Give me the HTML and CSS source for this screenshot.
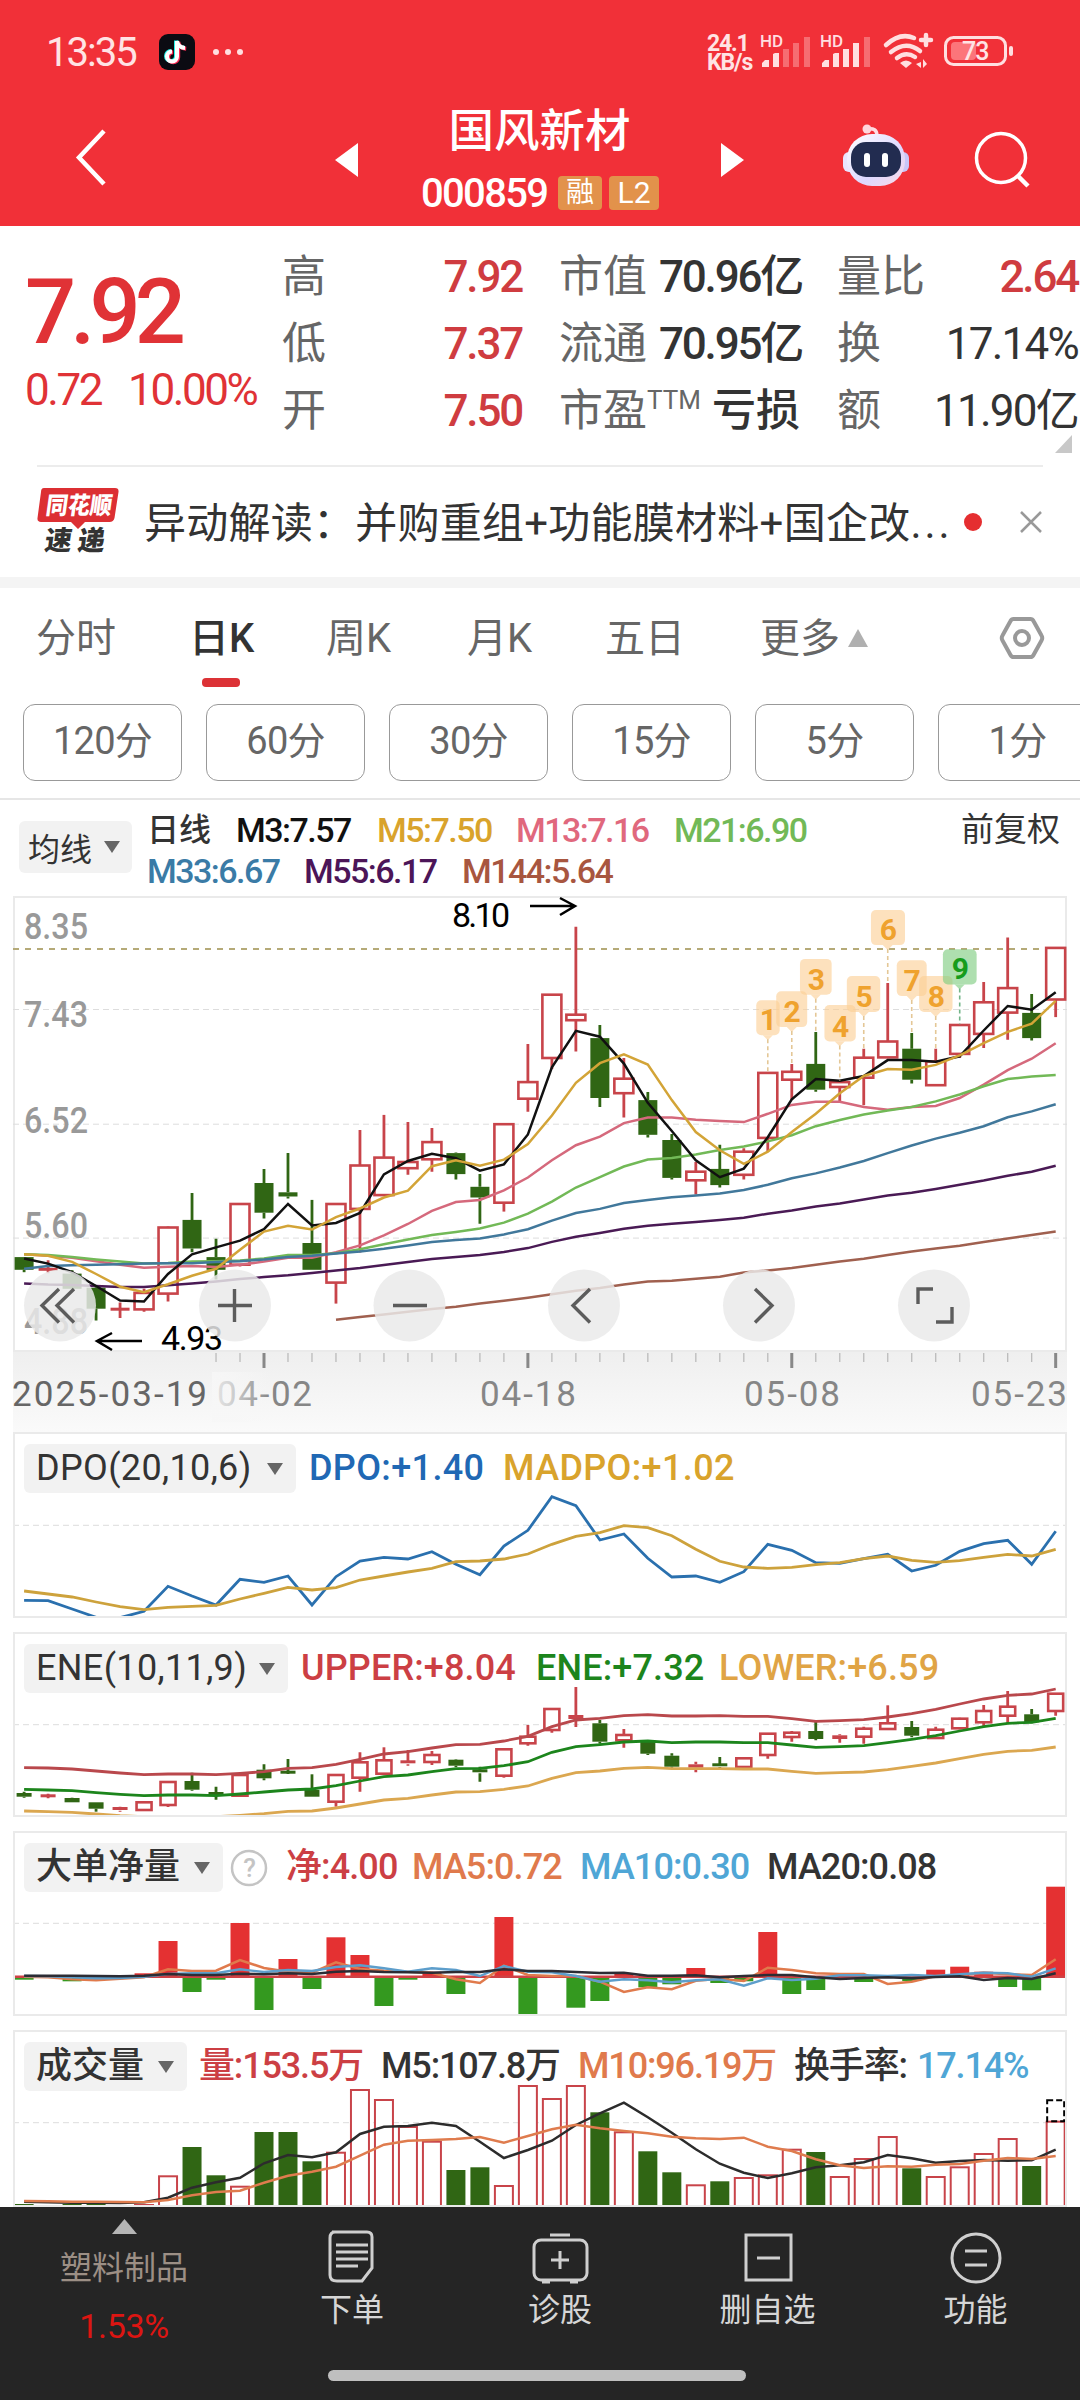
FILE: index.html
```html
<!DOCTYPE html>
<html lang="zh-CN">
<head>
<meta charset="utf-8">
<title>国风新材 000859</title>
<link rel="stylesheet" href="styles.css">
</head>
<body>
<header class="top">
  <div class="status">
    <span class="clock">13:35</span>
    <svg class="tiktok" width="36" height="36" viewBox="0 0 36 36"><rect width="36" height="36" rx="9" fill="#0b0b12"/><g fill="none" stroke-width="4"><path d="M18 7v15.500a5 5 0 1 1-5-5M18 7q1 6.500 8 7" stroke="#25f4ee" transform="translate(-1 -.5)"/><path d="M18 7v15.500a5 5 0 1 1-5-5M18 7q1 6.500 8 7" stroke="#fe2c55" transform="translate(1.200 .8)"/><path d="M18 7v15.500a5 5 0 1 1-5-5M18 7q1 6.500 8 7" stroke="#fff"/></g></svg>
    <svg class="dots" width="32" height="8" viewBox="0 0 32 8" fill="#ffdfe0"><circle cx="4" cy="4" r="3"/><circle cx="16" cy="4" r="3"/><circle cx="28" cy="4" r="3"/></svg>
    <div class="speed"><span>24.1</span><span>KB/s</span></div>
    <svg class="signals" width="256" height="44" viewBox="759 30 256 44">
      <g fill="#ffdfe0">
        <text x="761" y="47" class="hd">HD</text><text x="821" y="47" class="hd">HD</text>
        <path d="M763 67v-4l3-3h4v7zM774 67V54l2-1h4v14z"/>
        <path d="M784 67V49h6v18zM794 67V43h6v24zM805 67V37h6v30z" opacity=".35"/>
        <path d="M823 67v-4l3-3h4v7zM834 67V54l2-1h4v14zM844 67V49h6v18zM854 67V43h6v24z"/>
        <path d="M865 67V37h6v30z" opacity=".35"/>
        <path d="M901 63q6-5 12 0l-6 5z"/>
        <path d="M922 62v6l-5-4zM924 68v-9l4 5z"/>
      </g>
      <g fill="none" stroke="#ffdfe0" stroke-width="5" stroke-linecap="round">
        <path d="M887 45q14-13 28-7M892 52q15-12 29-1M898 58q9-7 18-1M927 35v10M922 40h10" stroke-width="4.500"/>
        <rect x="946.500" y="37.500" width="60" height="27" rx="8" stroke-width="3"/>
        <path d="M1012 48v6" stroke-width="4"/>
      </g>
      <rect x="952" y="42" width="25" height="18" rx="4" fill="#ff8c90" opacity=".75"/>
      <text x="963" y="60" class="batt">73</text>
    </svg>
  </div>
  <nav class="nav">
    <svg class="back" width="32" height="60" viewBox="0 0 32 60"><path d="M29 3 4 29.500 29 56" fill="none" stroke="#fff" stroke-width="4.500"/></svg>
    <svg class="prev" width="23" height="34" viewBox="0 0 23 34"><path d="M23 0v34L0 17z" fill="#fff"/></svg>
    <div class="stock">
      <h1>国风新材</h1>
      <div class="code"><span class="num">000859</span><b class="cn">融</b><b class="l2">L2</b></div>
    </div>
    <svg class="next" width="23" height="34" viewBox="0 0 23 34"><path d="M0 0v34l23-17z" fill="#fff"/></svg>
    <svg class="bot" width="68" height="64" viewBox="0 0 68 64">
      <defs><linearGradient id="shell" x1="0" y1="0" x2="1" y2="1"><stop offset="0" stop-color="#fff"/><stop offset=".6" stop-color="#ddd8ff"/><stop offset="1" stop-color="#fbd9e6"/></linearGradient></defs>
      <path d="M25 6q10-2 10 7" fill="none" stroke="#ffdce2" stroke-width="3.500"/><circle cx="25" cy="6" r="4.500" fill="#ffd5dc"/>
      <rect x="1" y="29" width="14" height="20" rx="6" fill="#e9e4ff"/><rect x="53" y="29" width="14" height="20" rx="6" fill="#c9c6f8"/>
      <rect x="5" y="11" width="58" height="52" rx="25" fill="url(#shell)"/>
      <rect x="9" y="19" width="50" height="35" rx="15" fill="#222c50"/>
      <rect x="22" y="30" width="6" height="14" rx="3" fill="#fff"/><rect x="40" y="30" width="6" height="14" rx="3" fill="#fff"/>
    </svg>
    <svg class="search" width="58" height="58" viewBox="0 0 58 58"><circle cx="27" cy="27" r="24.500" fill="none" stroke="#fff" stroke-width="3.500"/><path d="M44 45l10 10" stroke="#fff" stroke-width="4.500"/></svg>
  </nav>
</header>

<section class="quote">
  <div class="price"><div class="last">7.92</div><div class="chg"><span>0.72</span><span>10.00%</span></div></div>
  <dl class="stats">
    <dt>高</dt><dd class="up">7.92</dd><dt>市值</dt><dd>70.96亿</dd><dt>量比</dt><dd class="up">2.64</dd>
    <dt>低</dt><dd class="up">7.37</dd><dt>流通</dt><dd>70.95亿</dd><dt>换</dt><dd class="lite">17.14%</dd>
    <dt>开</dt><dd class="up">7.50</dd><dt>市盈<sup>TTM</sup></dt><dd class="loss">亏损</dd><dt>额</dt><dd class="lite">11.90亿</dd>
  </dl>
</section>
<div class="expand"><svg width="17" height="18"><path d="M17 0v18H0z" fill="#c8c8c8"/></svg></div>

<section class="news">
  <svg width="84" height="76" viewBox="0 -1 84 76"><path d="M7 3h71q4 0 3.500 4l-4 26q-1 4-5 4H48l-7 7-7-7H4q-4 0-3.500-4L4 7q0-4 3-4z" fill="#dc2f33"/><text class="logo1" x="8" y="29" textLength="66" lengthAdjust="spacingAndGlyphs" transform="skewX(-8) translate(4 0)">同花顺</text><text class="logo2" x="9" y="65" textLength="60" transform="skewX(-8) translate(7 0)">速递</text></svg>
  <p>异动解读：并购重组+功能膜材料+国企改<i>...</i></p>
  <span class="dot"></span>
  <svg class="close" width="22" height="22" viewBox="0 0 22 22"><path d="M1 1l20 20M21 1L1 21" stroke="#999" stroke-width="2.500"/></svg>
</section>

<nav class="tabs">
  <a>分时</a><a class="on">日K</a><a>周K</a><a>月K</a><a>五日</a><a>更多<svg width="20" height="18"><path d="M10 0l10 18H0z" fill="#b0b0b0"/></svg></a>
  <svg class="gear" width="46" height="44" viewBox="0 0 46 44"><g fill="none" stroke="#999" stroke-width="4"><path d="M14.500 3h17q2 0 3 2l8 14.500q1.500 2.500 0 5L34.500 39q-1 2-3 2h-17q-2 0-3-2l-8-14.500q-1.500-2.500 0-5L11.500 5q1-2 3-2z"/><circle cx="23" cy="22" r="7"/></g></svg>
</nav>
<div class="chips"><a>120分</a><a>60分</a><a>30分</a><a>15分</a><a>5分</a><a>1分</a></div>

<section class="ma">
  <a class="pill">均线<i class="tri"></i></a>
  <div class="rows">
    <div class="row r1"><span class="day">日线</span><span class="k">M3:7.57</span><span class="gold">M5:7.50</span><span class="pink">M13:7.16</span><span class="lime">M21:6.90</span><span class="adj">前复权</span></div>
    <div class="row r2"><span class="blue">M33:6.67</span><span class="plum">M55:6.17</span><span class="brown">M144:5.64</span></div>
  </div>
</section>

<svg id="kline" width="1080" height="536" viewBox="0 896 1080 536"></svg>

<section class="panel">
  <div class="legend dpo"><a class="pill">DPO(20,10,6)<i class="tri"></i></a><span class="c-dpo">DPO:+1.40</span><span class="gold">MADPO:+1.02</span></div>
  <svg id="dpo" width="1054" height="186" viewBox="13 1432 1054 186"></svg>
</section>
<section class="panel">
  <div class="legend ene"><a class="pill">ENE(10,11,9)<i class="tri"></i></a><span class="c-up">UPPER:+8.04</span><span class="c-ene">ENE:+7.32</span><span class="c-low">LOWER:+6.59</span></div>
  <svg id="ene" width="1054" height="185" viewBox="13 1632 1054 185"></svg>
</section>
<section class="panel">
  <div class="legend net"><a class="pill">大单净量<i class="tri"></i></a><svg width="38" height="38" viewBox="0 0 38 38"><circle cx="19" cy="19" r="17" fill="none" stroke="#c4c4c4" stroke-width="2.500"/><text x="19" y="28" class="q">?</text></svg><span class="c-up">净:4.00</span><span class="c-or">MA5:0.72</span><span class="c-sky">MA10:0.30</span><span class="c-dk">MA20:0.08</span></div>
  <svg id="net" width="1054" height="185" viewBox="13 1831 1054 185"></svg>
</section>
<section class="panel last-panel">
  <div class="legend vol"><a class="pill">成交量<i class="tri"></i></a><span class="c-up">量:153.5万</span><span class="c-dk">M5:107.8万</span><span class="c-or">M10:96.19万</span><span class="c-dk">换手率:</span><span class="c-sky">17.14%</span></div>
  <svg id="vol" width="1054" height="177" viewBox="13 2030 1054 177"></svg>
</section>

<footer>
  <div class="bar">
    <a class="sector"><svg width="25" height="15"><path d="M12.500 0L25 15H0z" fill="#b5b5b5"/></svg><span>塑料制品</span><em>1.53%</em></a>
    <a><svg width="60" height="60" viewBox="0 0 60 60"><path d="M10 5h35q5 0 5 5v31l-10 13H15q-7 0-7-6V11q0-6 5-6" /><path d="M14 18h32M14 25h32M14 32h32M14 39h22"/></svg><span>下单</span></a>
    <a><svg width="60" height="60" viewBox="0 0 60 60"><rect x="4" y="13" width="53" height="40" rx="7"/><path d="M20 8h20M30 24v18M21 33h18M12 55h8M40 55h8"/></svg><span>诊股</span></a>
    <a><svg width="60" height="60" viewBox="0 0 60 60"><rect x="8" y="8" width="45" height="45"/><path d="M19 31h23"/></svg><span>删自选</span></a>
    <a><svg width="60" height="60" viewBox="0 0 60 60"><circle cx="30" cy="31" r="24"/><path d="M19 24h22M19 38h22"/></svg><span>功能</span></a>
  </div>
  <div class="home"></div>
</footer>
<script src="charts.js"></script>
</body>
</html>
```
FILE: styles.css
```css
*{box-sizing:border-box}
body{margin:0;width:1080px;height:2400px;overflow:hidden;background:#fff;color:#333;font-family:Roboto,"Noto Sans CJK SC",sans-serif;display:flex;flex-direction:column}
body>*{flex:none}
svg{display:block}
i,em{font-style:normal}
h1,p,dl,dd{margin:0}
.top{height:226px;background:#f13038;color:#fff}
.status{height:104px;display:flex;align-items:center;color:#ffe3e4}
.clock{margin-left:46px;width:113px;font-size:40px;letter-spacing:-.05em}
.dots{margin-left:17px}
.speed{margin-left:463px;width:51px;font-size:23px;font-weight:700;line-height:19px;letter-spacing:-.05em;white-space:nowrap;display:flex;flex-direction:column;padding-top:2px}
.signals{overflow:visible}
.hd{font-size:17px;font-weight:500}
.batt{font-size:25px;font-weight:500;letter-spacing:-1px;fill:#ffe3e4}
.nav{display:flex;align-items:flex-start}
.back{margin:24px 0 0 75px}
.prev{margin:39px 0 0 228px}
.stock{width:363px;display:flex;flex-direction:column;align-items:center}
h1{font-size:45.500px;line-height:50px;font-weight:500;margin-top:3px}
.code{display:flex;align-items:center;margin-top:15px;height:42px;font-size:40px;padding-left:1px}
.num{letter-spacing:-.042em;width:137px;font-weight:500}
.code b{font-size:30px;font-weight:400;height:34px;line-height:34px;background:#e2924b;border-radius:4px;text-align:center}
.code .cn{width:44px;margin-right:7px;font-size:28px}
.l2{width:50px}
.next{margin:39px 0 0}
.bot{margin:19px 0 0 98px}
.search{margin:27px 0 0 64px}
.quote{height:209px;display:flex}
.price{width:282px;padding-left:25px;color:#e03236}
.last{font-size:90px;font-weight:500;line-height:90px;margin-top:42px;letter-spacing:-.065em}
.chg{font-size:44px;line-height:50px;margin-top:7px;letter-spacing:-.055em;display:flex;gap:27px;white-space:nowrap}
.stats{display:grid;width:798px;grid-template-columns:80px 160px 137px 141px 110px 168px;grid-template-rows:repeat(3,67px);margin-top:18px}
.stats dt{font-size:44px;line-height:67px;color:#666;white-space:nowrap}
.stats dd{font-size:44px;line-height:67px;text-align:right;font-weight:500;letter-spacing:-.05em;white-space:nowrap}
.stats dd.loss{letter-spacing:0}
.stats dt:nth-of-type(3n+2){padding-left:37px;width:0}
.stats dt:nth-of-type(3n){padding-left:37px}
.stats .up{color:#cf3c40}
.stats dd.lite{font-weight:400;letter-spacing:-.04em}
.stats sup{font-size:26px;line-height:0;position:relative;top:-1px}
.expand{height:32px;display:flex;justify-content:flex-end;border-bottom:2px solid #ececec;margin:0 37px}
.expand svg{margin-right:-29px}
.news{height:110px;display:flex;align-items:center;padding-left:37px}
.news p{margin:-6px 0 0 23px;width:820px;font-size:42px;white-space:nowrap;letter-spacing:.006em}
.news i{letter-spacing:3px}
.logo1{font-size:24px;font-weight:900;fill:#fff}
.logo2{font-size:27px;font-weight:900;fill:#333}
.dot{width:18px;height:18px;border-radius:50%;background:#e52e30}
.close{margin-left:38px}
.tabs{height:127px;border-top:11px solid #f4f4f4;display:flex;color:#666;font-size:40px;line-height:56px;padding:23px 0 0 36px}
.tabs a{width:153px;height:84px;white-space:nowrap;display:flex;align-items:flex-start}
.tabs a:nth-of-type(2){width:137px;color:#333;font-weight:500;flex-direction:column}
.tabs a:nth-of-type(2)::after{content:"";width:38px;height:9px;border-radius:4px;background:#dc3236;margin:11px 0 0 13px}
.tabs a:nth-of-type(3){width:141px}
.tabs a:nth-of-type(4){width:138px}
.tabs a:nth-of-type(5){width:155px}
.tabs a:nth-of-type(6){width:239px}
.tabs a svg{margin:18px 0 0 8px}
.gear{margin-top:5px}
.chips{height:96px;border-bottom:2px solid #e6e6e6;display:flex;gap:24px;padding-left:23px;overflow:hidden}
.chips a{flex:none;width:159px;height:77px;border:1.500px solid #999;border-radius:12px;font-size:38px;line-height:72px;text-align:center;color:#666;letter-spacing:-.02em}
.pill{background:#f2f2f2;border-radius:6px;display:flex;align-items:center;justify-content:space-between;color:#333;white-space:nowrap}
.tri{display:block;border:8px solid transparent;border-top:12px solid #666;border-bottom:0}
.ma{height:96px;display:flex;padding-left:19px}
.ma .pill{width:113px;height:52px;margin-top:21px;font-size:32px;padding:0 12px 0 9px}
.rows{padding:9px 0 0 15px}
.row{display:grid;font-size:34px;line-height:42px;height:41px;white-space:nowrap;letter-spacing:-.045em;font-weight:500}
.r1{grid-template-columns:89px 141px 139px 158px 287px 110px}
.r2{grid-template-columns:157px 158px 200px}
.day{letter-spacing:0;font-size:32px}
.adj{letter-spacing:0;font-size:33px;font-weight:400}
.k{color:#111}.gold{color:#d9a32c}.pink{color:#e0687d}.lime{color:#72b957}.blue{color:#3a7ba6}.plum{color:#4c1558}.brown{color:#a8563f}
.panel{position:relative;height:186px;margin:0 13px 14px;outline:2px solid #eaeaea;outline-offset:-2px}
.panel:nth-of-type(n+5){height:185px}
.panel.last-panel{height:177px;margin-bottom:0;overflow:hidden}
.legend{position:absolute;left:11px;top:12px;display:grid;align-items:center;font-size:36px;line-height:49px;white-space:nowrap;z-index:1;font-weight:500}
.legend .pill{height:49px;padding:0 13px 0 12px;justify-self:start}
.dpo{grid-template-columns:285px 194px 300px;letter-spacing:.01em}
.ene{grid-template-columns:277px 235px 183px 240px;letter-spacing:.004em}
.net{grid-template-columns:206px 56px 126px 168px 187px 200px;letter-spacing:-.025em}
.vol{grid-template-columns:175px 182px 197px 216px 123px 120px;letter-spacing:-.032em}
.dpo .pill{width:272px;letter-spacing:.01em;font-weight:400}
.ene .pill{width:264px;letter-spacing:.01em;font-weight:400}
.net .pill{width:199px;letter-spacing:0}
.vol .pill{width:163px;letter-spacing:0}
.q{font-size:26px;fill:#c4c4c4;text-anchor:middle}
.c-dpo{color:#2068b4}.c-up{color:#cc3f44}.c-ene{color:#1c851c}.c-low{color:#e0a445}.c-or{color:#e07a4c}.c-sky{color:#4fa6d6}.c-dk{color:#333}
.ylab{font-size:36px;font-weight:500;fill:#999}
.mark{font-size:34px;fill:#000}
.date{font-size:35px;fill:#868686}
.date.first{fill:#666}
.badge{font-size:30px;font-weight:700;text-anchor:middle}
footer{height:193px;background:#252525;color:#d6d6d6}
.bar{display:grid;grid-template-columns:248px 208px 208px 207px 209px;height:163px}
.bar a{display:flex;flex-direction:column;align-items:center;font-size:32px;line-height:40px;padding-top:20px}
.bar a svg{fill:none;stroke:#cfcfcf;stroke-width:3}
.bar a span{margin-top:3px}
.bar .sector{padding-top:12px;color:#9c8f85}
.bar .sector svg{stroke:none}
.bar .sector span{margin-top:14px}
.bar em{color:#dd1512;font-size:34px;letter-spacing:-.01em;margin-top:18px}
.home{width:418px;height:11px;border-radius:6px;background:#bfbfbf;margin-left:328px}
```
FILE: charts.js
```javascript
const RED = '#c8444a', GREEN = '#306614';
const X = i => 24.1 + i * 23.99;

// Each panel stores its values in a local y unit; y0 + v / k gives the page coordinate.
function plot(id, y0, k) {
  const out = [];
  const Y = v => +(y0 + v / k).toFixed(1);
  return {
    Y,
    add: s => out.push(s),
    grid(list) { list.forEach(v => out.push(`<path d="M13 ${Y(v)}H1067" stroke="#ddd" stroke-dasharray="6 4"/>`)); },
    line(vals, color, w = 2.5, from = 0) {
      out.push(`<polyline fill="none" stroke="${color}" stroke-width="${w}" points="${vals.map((v, i) => X(i + from).toFixed(1) + ',' + Y(v)).join(' ')}"/>`);
    },
    candles(rows, width) {
      rows.trim().split(/\s+/).forEach((r, i) => {
        const up = r[0] === 'r', [h, t, b, l] = r.slice(1).split(',').map(Number), x = X(i);
        const color = up ? RED : GREEN, top = Y(t), bh = Math.max(Y(b) - top, 3);
        out.push(`<path d="M${x} ${Y(h)}V${top}M${x} ${Y(b)}V${Y(l)}" stroke="${color}" stroke-width="2.8"/>`);
        if (up && bh > 4) out.push(`<rect x="${x - width / 2}" y="${top}" width="${width}" height="${bh}" fill="#fff" stroke="${color}" stroke-width="2.6"/>`);
        else out.push(`<rect x="${x - width / 2}" y="${top - (bh <= 3 ? 1 : 0)}" width="${width}" height="${bh}" fill="${color}"/>`);
      });
    },
    done() { document.getElementById(id).innerHTML = out.join(''); }
  };
}

// Daily candles
{
  const p = plot('kline', 890, 2.904), Y = p.Y;
  p.add('<defs><linearGradient id="ax" x1="0" y1="0" x2="0" y2="1"><stop offset="0" stop-color="#efefef"/><stop offset="1" stop-color="#fafafa"/></linearGradient><linearGradient id="fade"><stop offset="0" stop-color="#f7f7f7" stop-opacity=".85"/><stop offset=".3" stop-color="#f7f7f7" stop-opacity=".7"/><stop offset="1" stop-color="#f7f7f7" stop-opacity="0"/></linearGradient></defs>');
  p.add('<rect x="13" y="1352" width="1054" height="80" fill="url(#ax)"/><rect x="14" y="897" width="1052" height="454" fill="#fff" stroke="#eaeaea" stroke-width="2"/>');
  p.grid([347, 680, 1011]);
  p.add(`<path d="M13 ${Y(171)}H1067" stroke="#b5aa78" stroke-width="2" stroke-dasharray="6 6"/>`);
  [['8.35', 939], ['7.43', 1027], ['6.52', 1133], ['5.60', 1238], ['4.88', 1334]].forEach(([t, y]) =>
    p.add(`<text class="ylab" x="24" y="${y}" textLength="64" lengthAdjust="spacingAndGlyphs">${t}</text>`));
  p.candles(`g1066,1066,1103,1110 r1075,1100,1103,1113 g1104,1114,1158,1158 g1150,1155,1216,1250 r1198,1216,1219,1243 r1158,1170,1218,1225
    r977,980,1172,1195 g880,958,1041,1052 g1013,1066,1103,1131 r910,912,1088,1093 g810,851,937,954 g764,878,890,896 g900,1025,1103,1103
    r912,912,1140,1201 r697,800,926,1053 r653,777,886,886 r674,790,808,827 r691,732,782,818 g762,764,825,841 g825,862,893,969 r680,680,908,934
    r447,558,606,644 r304,304,488,520 r107,362,378,469 g392,430,604,630 r488,548,590,661 g587,610,711,719 g709,726,836,841 r790,818,843,884
    g740,810,857,864 r750,760,827,841 r531,531,720,760 r505,528,551,610 g412,505,580,586 r555,558,572,615 r461,487,545,625 r270,440,486,486
    g415,461,551,562 r461,498,567,567 r390,392,476,488 r267,326,418,459 r138,285,356,435 g302,357,430,437 r168,168,318,369`, 19);
  p.line([1248,1240,1233,1225,1217,1210,1201,1193,1184,1174,1164,1156,1146,1137,1135,1129,1123,1111,1105,1098,1088,1079,1071,1060,1050,1041,1033,1022,1012,1002,992], '#a0604f', 2.5, 13);
  p.line([1143,1146,1147,1150,1153,1153,1148,1143,1137,1130,1124,1119,1112,1105,1098,1089,1080,1072,1066,1060,1051,1040,1022,1007,996,984,975,969,964,958,952,940,931,919,910,899,887,879,868,856,844,830,818,801], '#4a1a55');
  p.line([1058,1062,1068,1078,1088,1097,1094,1092,1095,1088,1079,1068,1068,1052,1032,1003,970,932,906,900,872,835,785,741,716,677,661,661,667,671,674,650,624,615,615,630,638,630,627,604,565,523,490,445], '#d5697c');
  p.line([1058,1060,1066,1073,1079,1085,1083,1079,1078,1076,1070,1060,1060,1055,1043,1029,1015,1002,993,983,966,940,905,864,834,803,783,778,768,755,745,730,712,686,668,652,640,630,614,594,570,549,542,537], '#72b957');
  p.line([1100,1092,1090,1088,1087,1085,1084,1084,1080,1078,1073,1066,1062,1056,1050,1042,1032,1022,1016,1012,1000,985,960,938,926,909,900,892,887,881,871,856,837,823,806,787,764,742,722,705,686,660,643,622], '#41789b');
  p.line([1070,1085,1110,1150,1192,1195,1115,1058,1038,1018,985,912,974,967,938,826,787,766,779,815,797,710,515,409,426,504,618,700,785,834,809,718,608,549,554,540,494,494,499,483,408,337,348,297], '#111');
  p.line([1058,1062,1080,1115,1152,1168,1145,1120,1100,1045,992,975,986,950,925,893,873,802,785,801,783,738,655,560,503,477,507,610,703,756,795,760,703,650,590,540,520,522,508,480,445,412,388,322], '#d3a437');
  p.add('<g fill="none" stroke="#000" stroke-width="2.5"><path d="M530 906H575M560 898l15 8-15 9"/><path d="M142 1341H97M112 1333l-15 8 15 9"/></g>');
  p.add('<text class="mark" x="452" y="927" textLength="58">8.10</text><text class="mark" x="161" y="1350" textLength="62">4.93</text>');

  const badges = [[1,31,628,696,320,422,530],[2,32,686,776,294,398,505],[3,33,755,847,200,304,412],[4,34,826,917,334,440,555],[5,35,891,988,250,354,461],[6,36,961,1060,58,160,270],[7,37,1036,1123,204,308,415],[8,38,1101,1198,250,354,461],[9,39,1170,1268,172,274,390]];
  badges.forEach(([n, i, a, b, t, bot, end]) => {
    const x = 540 + a / 2.904, w = (b - a) / 2.904, c = X(i), y = Y(t), yb = Y(bot), green = n === 9;
    const color = green ? '#169c1c' : '#efa22e';
    p.add(`<g fill="${green ? '#7ccb7e' : '#fbcf94'}" fill-opacity=".62"><rect x="${x}" y="${y}" width="${w}" height="${yb - y}" rx="5"/><path d="M${c - 5} ${yb}h10l-5 5z"/></g>`);
    p.add(`<path d="M${c} ${yb + 4}V${Y(end)}" stroke="${green ? '#72b588' : '#e4c796'}" stroke-width="1.6" stroke-dasharray="4 3"/>`);
    p.add(`<text class="badge" x="${x + w / 2 + .5}" y="${yb - 5}" fill="${color}">${n}</text>`);
  });

  [60, 235, 409.5, 584, 759, 934].forEach(x => p.add(`<circle cx="${x}" cy="1305.500" r="36" fill="#e9e9e9" fill-opacity=".84"/>`));
  p.add('<g fill="none" stroke="#5c5c5c" stroke-width="3.4"><path d="M59 1289l-17 16.500 17 17M74 1289l-17 16.500 17 17"/><path d="M218 1305.500h34M234.500 1289v33"/><path d="M393 1305.500h34"/><path d="M590 1289l-17 16.500 17 17"/><path d="M755 1289l17 16.500-17 17"/><path d="M933 1289h-15v15M936 1322h16v-15"/></g>');

  for (let i = 8; i < 44; i++) {
    const big = [10, 21, 32, 43].includes(i);
    p.add(`<path d="M${X(i)} 1353v${big ? 15 : 9}" stroke="${big ? '#888' : '#bbb'}" stroke-width="${big ? 3 : 1.3}"/>`);
  }
  [['04-02', 217, 95], ['04-18', 480, 96], ['05-08', 744, 96], ['05-23', 971, 96]].forEach(([t, x, w]) =>
    p.add(`<text class="date" x="${x}" y="1406" textLength="${w}">${t}</text>`));
  p.add('<rect x="212" y="1372" width="58" height="50" fill="url(#fade)"/><text class="date first" x="12" y="1406" textLength="195">2025-03-19</text>');
  p.done();
}

// DPO
{
  const p = plot('dpo', 1425, 3);
  p.grid([301]);
  p.line([526,527,552,577,578,559,484,513,540,463,472,453,540,455,408,397,402,380,418,449,363,316,215,242,345,327,400,456,453,472,440,358,376,413,415,401,388,438,421,379,356,346,418,319], '#2a70ae', 2.8);
  p.line([498,507,516,531,545,554,547,544,541,522,505,487,495,488,465,453,441,430,410,408,402,387,358,334,323,302,308,332,373,409,426,430,427,419,413,401,393,406,412,407,397,388,393,373], '#cda23c', 2.8);
  p.done();
}

// ENE
{
  const p = plot('ene', 1425, 3);
  p.grid([899]);
  p.candles(`g1100,1104,1115,1118 r1106,1111,1116,1120 g1118,1119,1132,1132 g1132,1132,1151,1160 r1145,1149,1157,1160 r1130,1132,1155,1158
    r1071,1071,1140,1146 g1043,1068,1094,1097 g1085,1104,1113,1124 r1050,1050,1112,1112 g1018,1034,1060,1066 g1002,1040,1044,1047
    g1048,1095,1115,1115 r1050,1050,1130,1145 r982,1012,1058,1100 r967,1006,1046,1046 r975,1009,1018,1022 r978,990,1011,1020 g1003,1004,1022,1026
    g1025,1036,1045,1070 r973,973,1052,1058 r900,935,955,962 r850,852,915,923 r786,870,882,906 g885,895,950,956 r912,930,946,968 g945,951,986,990
    g985,992,1025,1028 r1010,1018,1028,1042 g996,1018,1026,1034 r998,1000,1026,1030 r925,926,990,1001 r918,923,936,950 g890,918,942,946
    r928,931,942,953 r905,911,935,956 r841,895,912,912 g888,906,932,937 r905,914,939,940 r878,881,910,913 r840,858,892,906 r798,845,872,895
    g852,868,892,895 r805,806,858,872`, 15);
  p.line([1028,1029,1032,1038,1044,1049,1047,1047,1049,1045,1040,1030,1028,1018,1003,987,980,969,959,958,948,934,905,885,880,872,869,873,873,872,874,874,881,889,887,884,876,866,853,837,822,811,807,792], '#b9484c', 2.8);
  p.line([1093,1095,1097,1103,1108,1112,1110,1110,1112,1107,1101,1095,1092,1082,1068,1055,1050,1040,1031,1030,1022,1010,982,965,959,951,948,953,951,951,953,953,960,967,965,962,953,943,932,918,905,895,892,880], '#1c851c', 2.8);
  p.line([1158,1160,1162,1167,1172,1175,1174,1174,1175,1171,1166,1159,1158,1149,1137,1125,1120,1110,1101,1100,1093,1083,1060,1043,1038,1030,1027,1031,1031,1031,1032,1032,1039,1045,1043,1041,1034,1024,1014,1001,988,979,976,966], '#dba750', 2.8);
  p.done();
}

// Net large-order volume
{
  const p = plot('net', 1820, 3), Y = p.Y;
  p.grid([310]);
  [479,470,484,470,470,460,363,516,479,309,570,417,507,352,405,558,479,455,522,474,291,588,465,563,543,462,502,493,444,489,484,336,522,510,468,486,470,483,449,440,455,501,511,200].forEach((v, i) => {
    const up = v < 470, y = Y(Math.min(v, 470));
    p.add(`<rect x="${X(i) - 9.5}" y="${y}" width="19" height="${Math.max(Math.abs(Y(v) - Y(470)), 1)}" fill="${up ? '#e43132' : '#34991f'}"/>`);
  });
  p.add(`<path d="M13 ${Y(470)}H1066" stroke="#cf4145" stroke-width="2.4"/>`);
  p.line([470,472,478,481,476,472,448,453,452,420,444,455,458,427,447,452,455,458,478,489,437,465,468,468,485,516,502,508,482,476,483,443,450,460,462,462,492,485,468,465,458,463,465,418], '#e07a4c');
  p.line([468,469,472,475,474,470,462,460,460,448,456,450,453,441,436,445,455,445,450,468,438,455,457,468,485,478,481,487,481,478,497,475,480,476,466,466,468,465,468,463,458,460,470,445], '#5d9ecb', 2.4);
  p.line([467,467,467,468,469,467,462,465,465,461,463,460,462,455,453,456,457,458,456,456,448,453,453,456,459,458,467,467,466,472,468,465,465,472,477,474,472,475,471,469,480,474,477,460], '#2c2c34');
  p.done();
}

// Volume
{
  const p = plot('vol', 1820, 3), Y = p.Y;
  p.grid([908]);
  'g1152 r1158 g1152 g1152 r1165 r1155 r1069 g981 g1066 r1100 g936 g936 g1024 r998 r810 r840 r921 r965 g1050 g1042 r1098 r798 r837 r798 g877 r937 g994 g1057 r1096 g1084 r1074 r1066 r989 g996 r1071 r1017 r951 g1045 r1071 r1042 r1002 r957 g1038 r905'.split(' ').forEach((s, i) => {
    const y = Y(+s.slice(1));
    if (s[0] === 'g') p.add(`<rect x="${X(i) - 9.5}" y="${y}" width="19" height="200" fill="${GREEN}"/>`);
    else p.add(`<rect x="${X(i) - 9}" y="${y}" width="18" height="200" fill="#fff" stroke="${RED}" stroke-width="2"/>`);
  });
  p.add(`<rect x="${X(43) - 8.5}" y="${Y(841)}" width="17" height="21" fill="none" stroke="#000" stroke-width="2" stroke-dasharray="6 3"/>`);
  p.line([1145,1147,1148,1148,1149,1147,1133,1103,1087,1073,1030,1005,1012,997,942,920,918,908,918,965,1014,990,962,915,880,848,892,938,988,1031,1058,1074,1060,1042,1036,1027,1005,1015,1028,1023,1020,1022,1021,989], '#2c2c2c');
  p.line([1143,1144,1145,1145,1146,1147,1140,1126,1116,1112,1088,1067,1055,1040,1007,974,962,960,957,951,968,948,928,914,925,933,940,950,955,957,953,980,993,1018,1036,1044,1039,1040,1034,1032,1022,1014,1017,1008], '#df7c4e');
  p.done();
}
```
